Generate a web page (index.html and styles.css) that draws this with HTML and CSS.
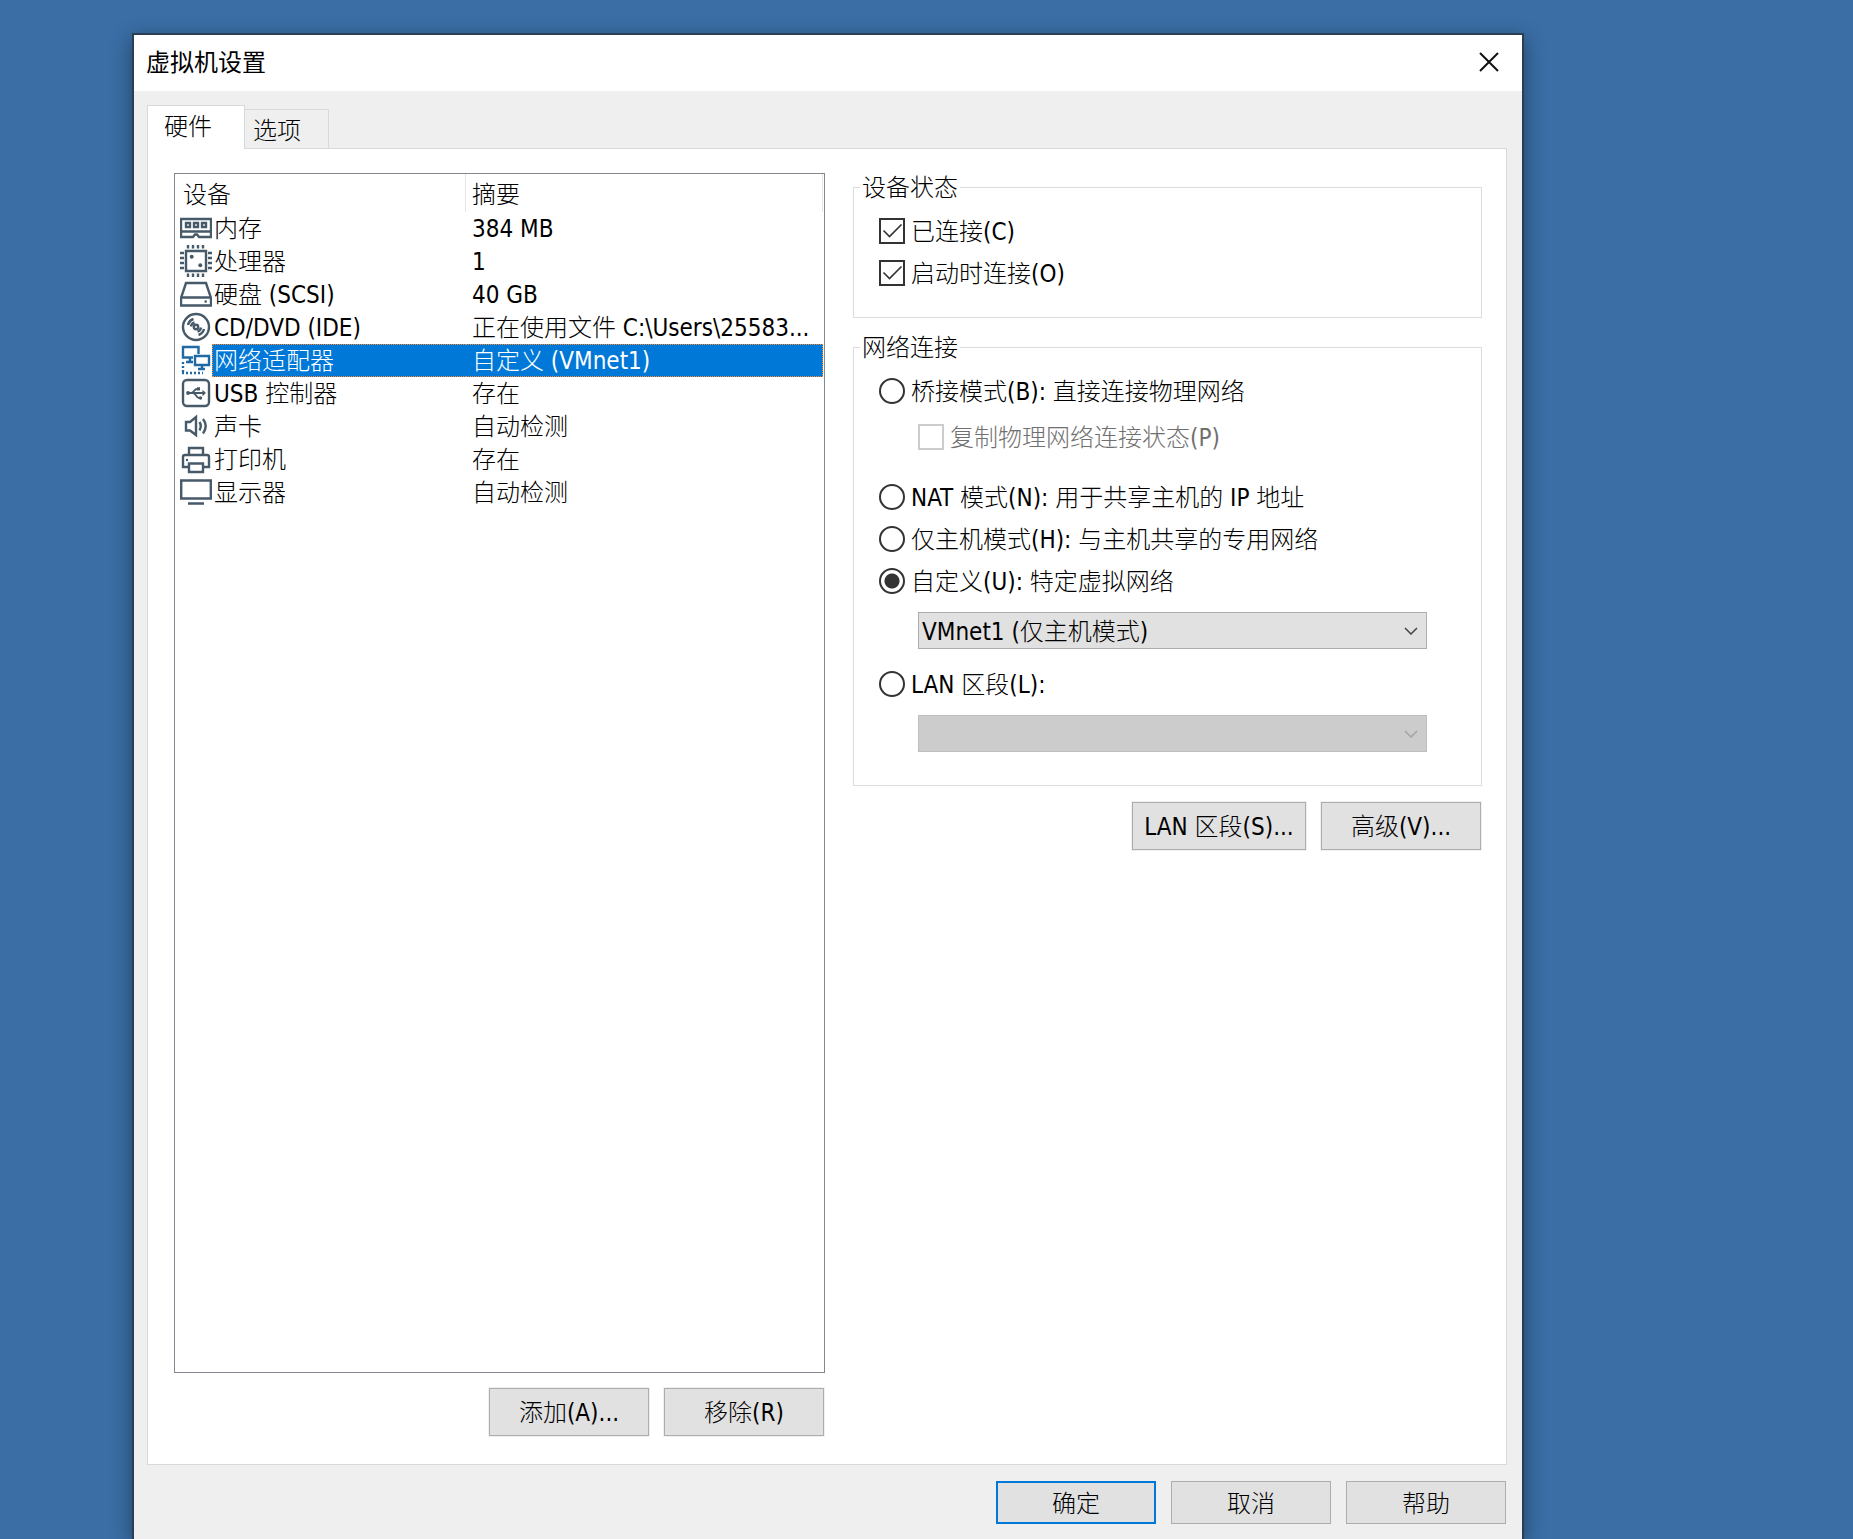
FILE: index.html
```html
<!DOCTYPE html>
<html lang="zh-CN">
<head>
<meta charset="utf-8">
<title>虚拟机设置</title>
<link rel="stylesheet" href="styles.css">
</head>
<body>
<main class="window">
  <header class="titlebar">
    <h1 class="title">虚拟机设置</h1>
    <button class="close" type="button" aria-label="关闭">
      <svg width="20" height="20" viewBox="0 0 20 20"><path d="M1 1 19 19M19 1 1 19" fill="none" stroke="#111" stroke-width="2"/></svg>
    </button>
  </header>

  <div class="tabs" role="tablist">
    <button class="tab tab-active" type="button" role="tab" aria-selected="true">硬件</button>
    <button class="tab" type="button" role="tab" aria-selected="false">选项</button>
  </div>

  <section class="panel">
    <div class="devices">
      <div class="device-list">
        <table class="device-table">
          <thead>
            <tr><th class="col-device" scope="col">设备</th><th scope="col">摘要</th></tr>
          </thead>
          <tbody>
            <tr>
              <td><div class="device">
                <svg class="icon" viewBox="0 0 32 33"><path d="M1 7H31V25H19L17 22.500H15L13 25H1ZM1 19.500H31"/><path d="M6 11H10V15H6ZM14 11H18V15H14ZM22 11H26V15H22Z"/></svg>
                <span class="name">内存</span></div></td>
              <td class="summary">384 MB</td>
            </tr>
            <tr>
              <td><div class="device">
                <svg class="icon" viewBox="0 0 32 33"><path d="M6 6H26V26H6Z"/><path d="M8 0V3.500M13 0V3.500M18 0V3.500M23 0V3.500M8 28.500V32M13 28.500V32M18 28.500V32M23 28.500V32M0 8H4M0 13H4M0 18H4M0 23H4M28 8H32M28 13H32M28 18H32M28 23H32"/><circle class="solid" cx="11.700" cy="11.700" r="2"/><circle class="solid" cx="20.300" cy="20.300" r="2"/></svg>
                <span class="name">处理器</span></div></td>
              <td class="summary">1</td>
            </tr>
            <tr>
              <td><div class="device">
                <svg class="icon" viewBox="0 0 32 33"><path d="M6 5H26L31 20V27.500H1V20ZM1 19.500H31"/><circle class="solid" cx="25.700" cy="23.500" r="1.300"/></svg>
                <span class="name">硬盘 (SCSI)</span></div></td>
              <td class="summary">40 GB</td>
            </tr>
            <tr>
              <td><div class="device">
                <svg class="icon" viewBox="0 0 32 33"><circle cx="16" cy="16" r="13"/><circle cx="16" cy="16" r="2.200"/><path d="M8 14A8.500 8.500 0 0 1 13.500 8M11 15.500A5 5 0 0 1 14.500 11.500M24 18A8.500 8.500 0 0 1 18.500 24M21 16.500A5 5 0 0 1 17.500 20.500"/></svg>
                <span class="name">CD/DVD (IDE)</span></div></td>
              <td class="summary">正在使用文件 C:\Users\25583...</td>
            </tr>
            <tr class="selected">
              <td><div class="device">
                <svg class="icon icon-active" viewBox="0 0 32 33"><path d="M13 13.500H3V3H18.500V10M10 13V18M6 18H13M15 12H29V21H15ZM22 21V25M18 25H25"/><path d="M3 18V28" stroke-dasharray="2 2"/><path d="M2 29H23" stroke-dasharray="2 2"/></svg>
                <span class="name">网络适配器</span></div></td>
              <td class="summary">自定义 (VMnet1)</td>
            </tr>
            <tr>
              <td><div class="device">
                <svg class="icon" viewBox="0 0 32 33"><rect x="3" y="3" width="26" height="26" rx="4"/><path class="thin" d="M8 16H25M11 16C14 16 14 12 17 12H18M13 16C16 16 16 21 19 21H20"/><circle class="solid" cx="8" cy="16" r="1.900"/><path class="solid" d="M22.500 12.800 26 16 22.500 19.200ZM17 10.200H20V13.500H17Z"/><circle class="solid" cx="20.500" cy="21" r="1.700"/></svg>
                <span class="name">USB 控制器</span></div></td>
              <td class="summary">存在</td>
            </tr>
            <tr>
              <td><div class="device">
                <svg class="icon" viewBox="0 0 32 33"><path d="M6 12H10L16 7V25L10 20.500H6ZM19.500 12Q22 16 19.500 20.500M23 9Q28.500 16 23 23.500"/></svg>
                <span class="name">声卡</span></div></td>
              <td class="summary">自动检测</td>
            </tr>
            <tr>
              <td><div class="device">
                <svg class="icon" viewBox="0 0 32 33"><path d="M9 12V5H23V12M8 24H3V14Q3 12 5 12H27Q29 12 29 14V24H24M9 20.500H23V29H9Z"/><circle class="solid" cx="7" cy="17" r="1.200"/></svg>
                <span class="name">打印机</span></div></td>
              <td class="summary">存在</td>
            </tr>
            <tr>
              <td><div class="device">
                <svg class="icon" viewBox="0 0 32 33"><path d="M1.200 4.500H30.800V22.500H1.200ZM8 27.500H24"/></svg>
                <span class="name">显示器</span></div></td>
              <td class="summary">自动检测</td>
            </tr>
          </tbody>
        </table>
      </div>
      <div class="actions">
        <button class="btn btn-ring" type="button">添加(A)...</button>
        <button class="btn btn-ring" type="button">移除(R)</button>
      </div>
    </div>

    <form class="settings">
      <fieldset class="group group-status">
        <legend>设备状态</legend>
        <label class="option"><input type="checkbox" checked>已连接(C)</label>
        <label class="option"><input type="checkbox" checked>启动时连接(O)</label>
      </fieldset>

      <fieldset class="group group-network">
        <legend>网络连接</legend>
        <label class="option"><input type="radio" name="net">桥接模式(B): 直接连接物理网络</label>
        <label class="option option-sub"><input type="checkbox" disabled>复制物理网络连接状态(P)</label>
        <label class="option"><input type="radio" name="net">NAT 模式(N): 用于共享主机的 IP 地址</label>
        <label class="option"><input type="radio" name="net">仅主机模式(H): 与主机共享的专用网络</label>
        <label class="option"><input type="radio" name="net" checked>自定义(U): 特定虚拟网络</label>
        <div class="combo">
          <select aria-label="特定虚拟网络"><option>VMnet1 (仅主机模式)</option></select>
          <svg class="chevron" width="14" height="8" viewBox="0 0 14 8"><path d="M1 1 7 7 13 1"/></svg>
        </div>
        <label class="option option-lan"><input type="radio" name="net">LAN 区段(L):</label>
        <div class="combo combo-disabled">
          <select aria-label="LAN 区段" disabled><option></option></select>
          <svg class="chevron" width="14" height="8" viewBox="0 0 14 8"><path d="M1 1 7 7 13 1"/></svg>
        </div>
      </fieldset>

      <div class="actions actions-settings">
        <button class="btn btn-ring btn-lan" type="button">LAN 区段(S)...</button>
        <button class="btn btn-ring" type="button">高级(V)...</button>
      </div>
    </form>
  </section>

  <footer class="footer">
    <button class="btn btn-default" type="button">确定</button>
    <button class="btn" type="button">取消</button>
    <button class="btn" type="button">帮助</button>
  </footer>
</main>
</body>
</html>
```
FILE: styles.css
```css
* { box-sizing: border-box; }

body {
  margin: 0;
  min-height: 100vh;
  padding: 33px 329px 0 132px;
  display: flex;
  flex-direction: column;
  background: #3a6ea5;
  color: #000;
  font: 300 24px/28px "DejaVu Sans Condensed", "Noto Sans CJK SC", sans-serif;
}

button, select, input { font: inherit; color: inherit; margin: 0; }

.window {
  flex: 1;
  display: flex;
  flex-direction: column;
  background: #efefef;
  border: 2px solid #2b3f54;
  border-bottom: 0;
  box-shadow: 0 6px 20px rgba(0, 0, 0, .4);
}

/* Title bar */
.titlebar {
  display: flex;
  align-items: center;
  justify-content: space-between;
  height: 56px;
  padding: 0 23px 0 12px;
  background: #fff;
}
.title { margin: 0; font-size: 24px; font-weight: 400; }
.close { display: flex; width: 20px; height: 20px; margin-bottom: 2px; padding: 0; border: 0; background: none; }

/* Tabs */
.tabs { display: flex; align-items: flex-end; padding: 14px 13px 0; }
.tab {
  display: flex;
  align-items: flex-start;
  width: 84px;
  height: 39px;
  padding: 7px 7px 0 8px;
  border: 1px solid #d9d9d9;
  border-width: 1px 1px 0 0;
  background: #efefef;
}
.tab-active {
  position: relative;
  width: 98px;
  height: 44px;
  margin-bottom: -1px;
  padding-left: 16px;
  border-left-width: 1px;
  background: #fff;
}

.panel {
  flex: 1;
  display: grid;
  grid-template-columns: minmax(0, 651fr) minmax(0, 629fr);
  column-gap: 28px;
  margin: 0 15px 0 13px;
  padding: 24px 24px 28px 26px;
  border: 1px solid #d9d9d9;
  background: #fff;
}

/* Device list */
.devices { display: flex; flex-direction: column; }
.device-list { flex: 1; padding-right: 1px; border: 1px solid #828790; }
.device-table { width: 100%; table-layout: fixed; border-collapse: separate; border-spacing: 0; }
.device-table th {
  height: 38px;
  padding: 4px 0 0 6px;
  border-right: 1px solid #e5e5e5;
  font-weight: inherit;
  text-align: left;
}
.device-table .col-device { width: 291px; padding-left: 8px; }
.device-table td { height: 33px; padding: 0; }
.device { display: flex; padding-left: 5px; }
.icon { flex: none; width: 32px; height: 33px; fill: none; stroke: #465a69; stroke-width: 2.4; color: #465a69; }
.icon .thin { stroke-width: 1.8; }
.icon .solid { fill: currentColor; stroke: none; }
.icon-active { stroke: #1f6aa5; color: #1f6aa5; }
.name { flex: 1; height: 33px; padding: 3px 1px 1px; border: 1px solid transparent; border-right: 0; line-height: 27px; }
.device-table .summary { padding: 2px 0 0 6px; border: 1px solid transparent; border-left: 0; line-height: 27px; white-space: nowrap; }
.selected .name, .selected .summary { background: #0078d7; border-color: #ff8728; border-style: dotted; color: #fff; }
.selected .name { border-right: 0; }
.selected .summary { border-left: 0; }

/* Buttons */
.actions { display: flex; justify-content: flex-end; gap: 15px; padding: 15px 1px 0 0; }
.actions-settings { padding-top: 16px; }
.btn { width: 160px; height: 48px; padding: 2px 0 0; border: 1px solid #adadad; background: #e1e1e1; white-space: nowrap; }
.btn-ring { box-shadow: 0 0 0 1px #f0f0f0; }
.btn-lan { width: 174px; }
.footer { display: flex; justify-content: flex-end; gap: 15px; padding: 16px 16px 15px; }
.footer .btn { height: 43px; }
.footer .btn-default { border: 2px solid #0078d7; }

/* Setting groups */
.group { min-width: 0; margin: 0; padding: 9px 54px 23px 25px; border: 1px solid #dcdcdc; }
.group legend { margin-left: -19px; padding: 2px 2px 0; line-height: 26px; }
.group-network { margin-top: 15px; padding-bottom: 33px; }
.option { display: flex; align-items: center; gap: 6px; height: 42px; padding-top: 2px; white-space: nowrap; }
.option-sub { margin: 4px 0 18px 39px; color: #707070; }
.option-lan { margin-top: 14px; }
.option input {
  appearance: none;
  flex: none;
  width: 26px;
  height: 26px;
  margin-bottom: 2px;
  border: 2px solid #333;
  background: #fff border-box no-repeat;
}
.option input[type="checkbox"]:checked {
  background-image: url("data:image/svg+xml,%3Csvg xmlns='http://www.w3.org/2000/svg' width='26' height='26'%3E%3Cpath d='M4.500 12.500l6 6 12-12' fill='none' stroke='%23333' stroke-width='1.600'/%3E%3C/svg%3E");
}
.option input[type="radio"] { border-radius: 50%; }
.option input[type="radio"]:checked { background-image: radial-gradient(circle, #333 7px, transparent 8px); }
.option input:disabled { border-color: #ccc; }

.combo { position: relative; margin: 10px 0 0 39px; }
.combo select {
  appearance: none;
  display: block;
  width: 100%;
  height: 37px;
  padding: 2px 30px 0 3px;
  border: 1px solid #adadad;
  border-radius: 0;
  background: #e1e1e1;
  opacity: 1;
}
.combo-disabled select { border-color: #bfbfbf; background: #ccc; }
.chevron { position: absolute; top: 15px; right: 9px; fill: none; stroke: #444; stroke-width: 1.500; pointer-events: none; }
.combo-disabled .chevron { stroke: #a3a3a3; }
```
